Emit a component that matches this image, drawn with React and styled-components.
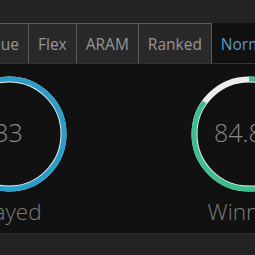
import React from "react";
import styled, { createGlobalStyle } from "styled-components";

const GlobalStyle = createGlobalStyle`
  html,
  body {
    margin: 0;
    background-color: #232323;
    overflow: hidden;
    font-family: "Open Sans", "Liberation Sans", sans-serif;
  }
`;

const Page = styled.div`
  height: 255px;
  padding-top: 23px;
  box-sizing: border-box;
  display: flex;
  flex-direction: column;
`;

const TabStrip = styled.div`
  display: flex;
  height: 41px;
`;

const Clip = styled.div`
  display: flex;
  justify-content: flex-end;
  flex: 0 0 29px;
  overflow: hidden;
`;

const Tab = styled.div`
  flex-shrink: 0;
  display: flex;
  align-items: center;
  padding: 0 9px;
  font-size: 15.5px;
  white-space: nowrap;
  color: ${p => (p.$active ? "#5f97c2" : "#969696")};
  background-color: ${p => (p.$active ? "#111111" : "#292929")};
  border: 1px solid #5c5c5c;
  border-top-color: ${p => (p.$active ? "#111111" : "#5c5c5c")};
  border-left: none;
`;

const Panel = styled.div`
  height: 170px;
  flex-shrink: 0;
  background-color: #111111;
  border-top: 1px solid #353535;
  padding-top: 11.5px;
  box-sizing: border-box;
  display: flex;
  margin-top: -1px;
`;

const StatRow = styled.div`
  display: flex;
  margin-left: -111.5px;
`;

const Stat = styled.div`
  flex: 0 0 240px;
  display: flex;
  flex-direction: column;
  align-items: center;
`;

const Dial = styled.div`
  display: grid;
  place-items: center;
  width: 116px;
  height: 116px;

  & > * {
    grid-area: 1 / 1;
  }
`;

const Value = styled.div`
  font-size: 25px;
  font-weight: 300;
  line-height: 25px;
  color: #8a8a8a;
  margin-top: -2px;
`;

const Label = styled.div`
  margin-top: 6px;
  font-size: 22.5px;
  font-weight: 300;
  line-height: 28px;
  color: #7c7c7c;
  white-space: nowrap;
`;

const Footer = styled.div`
  flex: 1;
  border-top: 1px solid #2f2f2f;
`;

const Ring = ({ percent, color }) => {
  const r = 55;
  const c = 2 * Math.PI * r;
  return (
    <svg width="116" height="116" viewBox="0 0 116 116">
      <circle cx="58" cy="58" r="54.5" fill="none" stroke="#ececec" strokeWidth="6" />
      <circle
        cx="58"
        cy="58"
        r={r}
        fill="none"
        stroke={color}
        strokeWidth="5"
        strokeDasharray={`${(c * percent) / 100} ${c}`}
        transform="rotate(-90 58 58)"
      />
    </svg>
  );
};

const tabs = ["Solo Queue", "Flex", "ARAM", "Ranked", "Normal"];

const stats = [
  { value: "33", label: "Played", percent: 100, color: "#2a9dc9" },
  { value: "84.8%", label: "Winning", percent: 84.8, color: "#3cbf8c" }
];

const App = () => (
  <Page>
    <GlobalStyle />
    <TabStrip>
      <Clip>
        <Tab>{tabs[0]}</Tab>
      </Clip>
      {tabs.slice(1).map(t => (
        <Tab key={t} $active={t === "Normal"}>
          {t}
        </Tab>
      ))}
    </TabStrip>
    <Panel>
      <StatRow>
        {stats.map(s => (
          <Stat key={s.label}>
            <Dial>
              <Ring percent={s.percent} color={s.color} />
              <Value>{s.value}</Value>
            </Dial>
            <Label>{s.label}</Label>
          </Stat>
        ))}
      </StatRow>
    </Panel>
    <Footer />
  </Page>
);

export default App;
